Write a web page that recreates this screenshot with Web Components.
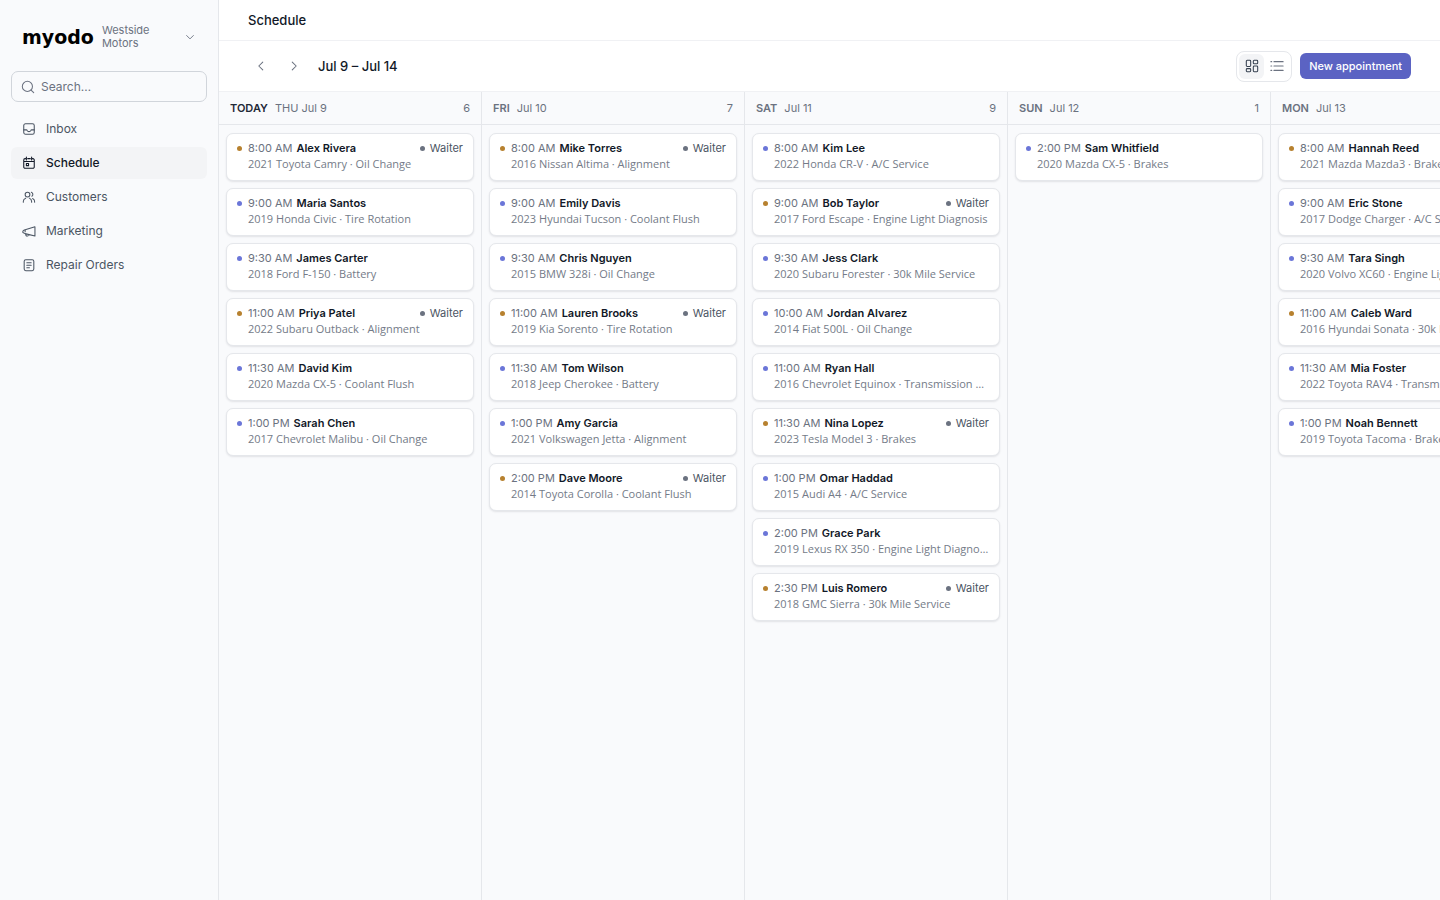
<!DOCTYPE html>
<html lang="en">
<head>
<meta charset="utf-8">
<meta name="viewport" content="width=device-width, initial-scale=1">
<title>Schedule</title>
<style>
  :root {
    --ink: #111827;
    --ink-soft: #4b5563;
    --muted: #6b7280;
    --line: #e5e7eb;
    --surface: #f9fafc;
    --accent: #5b63c3;
  }

  body {
    margin: 0;
    font: 12px/16px Inter, "Open Sans", sans-serif;
    color: var(--ink);
    background: #fff;
  }
</style>
</head>
<body>
<schedule-app></schedule-app>

<script>
const ICONS = {
  inbox: `<rect x="2" y="2" width="12" height="12" rx="2"/><path d="M2 9h3c.6 0 .8.4 1 .9.3.7.8 1.1 2 1.1s1.700-.4 2-1.100c.2-.5.4-.9 1-.9h3"/>`,
  calendar: `<path d="M3.500 3H4M6.500 3h3M12 3h.5A1.500 1.500 0 0 1 14 4.500v8a1.500 1.500 0 0 1-1.500 1.500h-9A1.500 1.500 0 0 1 2 12.500v-8A1.500 1.500 0 0 1 3.500 3M5 1.200v3.300M11 1.200v3.300M2 6.300h12"/><rect x="5" y="8.500" width="2.500" height="2.500"/>`,
  users: `<circle cx="6.300" cy="5.200" r="2.700"/><path d="M1.500 14v-.8a4.200 4.200 0 0 1 2.700-3.900M11 14v-.8a4.200 4.200 0 0 0-2.600-3.900M10.700 2.500a2.700 2.700 0 0 1 .6 4.700M12.200 9.800a4.300 4.300 0 0 1 2.300 4.200"/>`,
  megaphone: `<path d="M14.800 3.200v10.600L3.500 11 1 9.700V8.200l1.700-1.400zM3.800 11.100l.7 1.700c.3.800 1 1.100 1.800.9l1-.4c.6-.3.800-.7.600-1.300M3.600 6.700v2.200"/>`,
  clipboard: `<rect x="2.500" y="2" width="11" height="12.500" rx="1.800"/><path d="M5.500 5.500h5M5.500 8.300h5M5.500 11.200h3"/>`,
  search: `<circle cx="7.300" cy="7.300" r="5.800"/><path d="m11.500 11.500 3 3"/>`,
  down: `<path d="m3.500 6 4.500 4.500L12.500 6"/>`,
  left: `<path d="M10 3.500 5.500 8l4.500 4.500"/>`,
  right: `<path d="M6 3.500 10.500 8 6 12.500"/>`,
  board: `<rect x="1.500" y="1.500" width="5" height="7" rx="1"/><rect x="9.500" y="1.500" width="5" height="4" rx="1"/><rect x="1.500" y="11" width="5" height="3.500" rx="1"/><rect x="9.500" y="8" width="5" height="6.500" rx="1"/>`,
  list: `<path d="M4.500 3h10.500M4.500 8h10.500M4.500 13h10.500M1 3h1M1 8h1M1 13h1"/>`,
};

const DAYS = [
  { label: "TODAY", date: "THU Jul 9", today: true, items: [
    ["8:00 AM", "Alex Rivera", "2021 Toyota Camry · Oil Change", "waiter"],
    ["9:00 AM", "Maria Santos", "2019 Honda Civic · Tire Rotation"],
    ["9:30 AM", "James Carter", "2018 Ford F-150 · Battery"],
    ["11:00 AM", "Priya Patel", "2022 Subaru Outback · Alignment", "waiter"],
    ["11:30 AM", "David Kim", "2020 Mazda CX-5 · Coolant Flush"],
    ["1:00 PM", "Sarah Chen", "2017 Chevrolet Malibu · Oil Change"],
  ] },
  { label: "FRI", date: "Jul 10", items: [
    ["8:00 AM", "Mike Torres", "2016 Nissan Altima · Alignment", "waiter"],
    ["9:00 AM", "Emily Davis", "2023 Hyundai Tucson · Coolant Flush"],
    ["9:30 AM", "Chris Nguyen", "2015 BMW 328i · Oil Change"],
    ["11:00 AM", "Lauren Brooks", "2019 Kia Sorento · Tire Rotation", "waiter"],
    ["11:30 AM", "Tom Wilson", "2018 Jeep Cherokee · Battery"],
    ["1:00 PM", "Amy Garcia", "2021 Volkswagen Jetta · Alignment"],
    ["2:00 PM", "Dave Moore", "2014 Toyota Corolla · Coolant Flush", "waiter"],
  ] },
  { label: "SAT", date: "Jul 11", items: [
    ["8:00 AM", "Kim Lee", "2022 Honda CR-V · A/C Service"],
    ["9:00 AM", "Bob Taylor", "2017 Ford Escape · Engine Light Diagnosis", "waiter"],
    ["9:30 AM", "Jess Clark", "2020 Subaru Forester · 30k Mile Service"],
    ["10:00 AM", "Jordan Alvarez", "2014 Fiat 500L · Oil Change"],
    ["11:00 AM", "Ryan Hall", "2016 Chevrolet Equinox · Transmission Service"],
    ["11:30 AM", "Nina Lopez", "2023 Tesla Model 3 · Brakes", "waiter"],
    ["1:00 PM", "Omar Haddad", "2015 Audi A4 · A/C Service"],
    ["2:00 PM", "Grace Park", "2019 Lexus RX 350 · Engine Light Diagnosis"],
    ["2:30 PM", "Luis Romero", "2018 GMC Sierra · 30k Mile Service", "waiter"],
  ] },
  { label: "SUN", date: "Jul 12", items: [
    ["2:00 PM", "Sam Whitfield", "2020 Mazda CX-5 · Brakes"],
  ] },
  { label: "MON", date: "Jul 13", items: [
    ["8:00 AM", "Hannah Reed", "2021 Mazda Mazda3 · Brakes", "dropoff"],
    ["9:00 AM", "Eric Stone", "2017 Dodge Charger · A/C Service"],
    ["9:30 AM", "Tara Singh", "2020 Volvo XC60 · Engine Light Diagnosis"],
    ["11:00 AM", "Caleb Ward", "2016 Hyundai Sonata · 30k Mile Service", "dropoff"],
    ["11:30 AM", "Mia Foster", "2022 Toyota RAV4 · Transmission Service"],
    ["1:00 PM", "Noah Bennett", "2019 Toyota Tacoma · Brakes"],
  ] },
];

class UiIcon extends HTMLElement {
  constructor() {
    super();
    this.attachShadow({ mode: "open" });
  }

  connectedCallback() {
    this.shadowRoot.innerHTML = `
    <style>
      :host { display: block; flex: none; width: 14px; height: 14px; }
      svg { display: block; width: 100%; height: 100%; }
    </style>
    <svg viewBox="0 0 16 16" fill="none" stroke="currentColor" stroke-width="1.2"
      stroke-linecap="round" stroke-linejoin="round" aria-hidden="true">${ICONS[this.getAttribute("name")]}</svg>
  `;
  }
}
customElements.define("ui-icon", UiIcon);

class NavItem extends HTMLElement {
  constructor() {
    super();
    this.attachShadow({ mode: "open" });
  }

  connectedCallback() {
    this.shadowRoot.innerHTML = `
    <style>
      :host { display: block; }
      a {
        display: flex;
        align-items: center;
        gap: 10px;
        padding: 8px 11px;
        border-radius: 6px;
        color: var(--ink-soft);
        text-decoration: none;
      }
      a:hover, :host([active]) a { background: #f3f4f6; }
      :host([active]) a { color: var(--ink); font-weight: 500; }
    </style>
    <a href="#${this.getAttribute("to")}"${this.hasAttribute("active") ? ' aria-current="page"' : ""}>
      <ui-icon name="${this.getAttribute("icon")}"></ui-icon>
      <slot></slot>
    </a>
  `;
  }
}
customElements.define("nav-item", NavItem);

class SideBar extends HTMLElement {
  constructor() {
    super();
    this.attachShadow({ mode: "open" }).innerHTML = `
    <style>
      :host {
        display: flex;
        flex-direction: column;
        box-sizing: border-box;
        padding: 24px 11px;
        background: var(--surface);
        border-right: 1px solid var(--line);
      }
      .brand {
        display: flex;
        align-items: center;
        gap: 8px;
        padding: 0 11px;
        margin-bottom: 21px;
      }
      .logo {
        color: #000;
        font: bold 19px/26px "DejaVu Sans", sans-serif;
        text-decoration: none;
      }
      .shop {
        flex: 1;
        display: flex;
        align-items: center;
        justify-content: space-between;
        padding: 0;
        border: 0;
        background: none;
        color: var(--muted);
        font: 11px/13px Inter, sans-serif;
        text-align: left;
      }
      .shop span { max-width: 60px; }
      .shop ui-icon { width: 12px; height: 12px; }
      .search {
        display: flex;
        align-items: center;
        gap: 6px;
        padding: 0 9px;
        margin-bottom: 11px;
        border: 1px solid #d1d5db;
        border-radius: 7px;
        color: var(--muted);
      }
      input {
        flex: 1;
        min-width: 0;
        height: 29px;
        padding: 0;
        border: 0;
        outline: 0;
        background: none;
        color: var(--ink);
        font: 12px/16px Inter, sans-serif;
      }
      input::placeholder { color: var(--muted); opacity: 1; }
      nav { display: flex; flex-direction: column; gap: 2px; }
    </style>
    <div class="brand">
      <a class="logo" href="#home">myodo</a>
      <button class="shop" type="button"><span>Westside Motors</span><ui-icon name="down"></ui-icon></button>
    </div>
    <label class="search">
      <ui-icon name="search"></ui-icon>
      <input type="search" placeholder="Search…" aria-label="Search">
    </label>
    <nav>
      <nav-item icon="inbox" to="inbox">Inbox</nav-item>
      <nav-item icon="calendar" to="schedule" active>Schedule</nav-item>
      <nav-item icon="users" to="customers">Customers</nav-item>
      <nav-item icon="megaphone" to="marketing">Marketing</nav-item>
      <nav-item icon="clipboard" to="repair-orders">Repair Orders</nav-item>
    </nav>
  `;
  }
}
customElements.define("side-bar", SideBar);

class ScheduleToolbar extends HTMLElement {
  constructor() {
    super();
    this.attachShadow({ mode: "open" }).innerHTML = `
    <style>
      :host {
        display: flex;
        align-items: center;
        justify-content: space-between;
        box-sizing: border-box;
        height: 51px;
        padding: 0 29px;
        border-bottom: 1px solid #f0f1f4;
      }
      div { display: flex; align-items: center; }
      button {
        display: grid;
        place-items: center;
        height: 26px;
        padding: 0;
        border: 0;
        border-radius: 6px;
        background: none;
        color: var(--muted);
        font: 500 11px/16px Inter, sans-serif;
      }
      .range { gap: 7px; }
      .range button { width: 26px; }
      h2 { margin: 0 0 0 4px; font-size: 13px; font-weight: 500; }
      .actions { gap: 8px; }
      .views {
        padding: 2px;
        border: 1px solid var(--line);
        border-radius: 8px;
      }
      .views button { width: 25px; height: 25px; }
      .views button[aria-pressed="true"] { background: #f3f4f6; color: #374151; }
      .actions .new {
        padding: 0 9px;
        background: var(--accent);
        color: #fff;
      }
    </style>
    <div class="range">
      <button type="button" aria-label="Previous days"><ui-icon name="left"></ui-icon></button>
      <button type="button" aria-label="Next days"><ui-icon name="right"></ui-icon></button>
      <h2>Jul 9 – Jul 14</h2>
    </div>
    <div class="actions">
      <div class="views">
        <button type="button" aria-label="Board view" aria-pressed="true"><ui-icon name="board"></ui-icon></button>
        <button type="button" aria-label="List view" aria-pressed="false"><ui-icon name="list"></ui-icon></button>
      </div>
      <button class="new" type="button">New appointment</button>
    </div>
  `;
  }
}
customElements.define("schedule-toolbar", ScheduleToolbar);

class AppointmentCard extends HTMLElement {
  constructor() {
    super();
    this.attachShadow({ mode: "open" });
  }

  set appointment(appointment) {
    this._appointment = appointment;
    this.render();
  }

  render() {
    const [time, name, job, kind] = this._appointment;
    this.shadowRoot.innerHTML = `
    <style>
      :host {
        display: block;
        padding: 6px 10px 8px;
        border: 1px solid var(--line);
        border-radius: 7px;
        background: #fff;
        box-shadow: 0 1px 2px rgba(17, 24, 39, 0.1);
        font-size: 11px;
      }
      .top { display: flex; align-items: center; }
      .dot {
        flex: none;
        width: 5px;
        height: 5px;
        margin-right: 6px;
        border-radius: 50%;
        background: #6b76d8;
      }
      .dot.amber { background: #b7812f; }
      .dot.grey { background: var(--muted); margin-right: 5px; }
      time { margin-right: 4px; color: var(--muted); }
      strong { font-weight: 600; }
      .waiter {
        display: flex;
        align-items: center;
        margin-left: auto;
        color: var(--ink-soft);
      }
      p {
        margin: 0 0 0 11px;
        overflow: hidden;
        color: #747b88;
        font-family: "Open Sans", "Noto Sans", sans-serif;
        text-overflow: ellipsis;
        white-space: nowrap;
      }
    </style>
    <div class="top">
      <span class="dot ${kind ? "amber" : ""}"></span>
      <time>${time}</time>
      <strong>${name}</strong>
      ${kind === "waiter" ? '<span class="waiter"><span class="dot grey"></span>Waiter</span>' : ""}
    </div>
    <p>${job}</p>
  `;
  }
}
customElements.define("appointment-card", AppointmentCard);

class DayColumn extends HTMLElement {
  constructor() {
    super();
    this.attachShadow({ mode: "open" });
  }

  set day(day) {
    this._day = day;
    this.render();
  }

  render() {
    const { label, date, today, items } = this._day;
    this.shadowRoot.innerHTML = `
    <style>
      :host {
        display: block;
        flex: none;
        box-sizing: border-box;
        width: 263px;
        border-right: 1px solid var(--line);
      }
      header {
        display: flex;
        gap: 7px;
        padding: 8px 11px;
        border-bottom: 1px solid var(--line);
        color: var(--muted);
        font-size: 11px;
      }
      h3 { margin: 0; font-size: 11px; font-weight: 600; }
      h3.today { color: #1f2937; }
      .count { margin-left: auto; }
      .cards {
        display: flex;
        flex-direction: column;
        gap: 7px;
        padding: 8px 7px;
      }
    </style>
    <header>
      <h3 class="${today ? "today" : ""}">${label}</h3>
      <span>${date}</span>
      <span class="count">${items.length}</span>
    </header>
    <div class="cards"></div>
  `;
    const cards = this.shadowRoot.querySelector(".cards");
    items.forEach((item) => {
      const card = document.createElement("appointment-card");
      card.appointment = item;
      cards.appendChild(card);
    });
  }
}
customElements.define("day-column", DayColumn);

class ScheduleBoard extends HTMLElement {
  constructor() {
    super();
    this.attachShadow({ mode: "open" }).innerHTML = `
    <style>
      :host {
        display: flex;
        overflow: auto;
        scrollbar-width: none;
        background: var(--surface);
      }
    </style>
  `;
    DAYS.forEach((day) => {
      const column = document.createElement("day-column");
      column.day = day;
      this.shadowRoot.appendChild(column);
    });
  }
}
customElements.define("schedule-board", ScheduleBoard);

class ScheduleApp extends HTMLElement {
  constructor() {
    super();
    this.attachShadow({ mode: "open" }).innerHTML = `
    <style>
      :host {
        display: grid;
        grid-template-columns: 219px minmax(0, 1fr);
        height: 100vh;
      }
      main { display: flex; flex-direction: column; min-height: 0; }
      h1 {
        margin: 0;
        padding: 12px 29px;
        border-bottom: 1px solid #f0f1f4;
        font-size: 13px;
        font-weight: 500;
      }
      schedule-board { flex: 1; min-height: 0; }
    </style>
    <side-bar></side-bar>
    <main>
      <h1>Schedule</h1>
      <schedule-toolbar></schedule-toolbar>
      <schedule-board></schedule-board>
    </main>
  `;
  }
}
customElements.define("schedule-app", ScheduleApp);
</script>
</body>
</html>
